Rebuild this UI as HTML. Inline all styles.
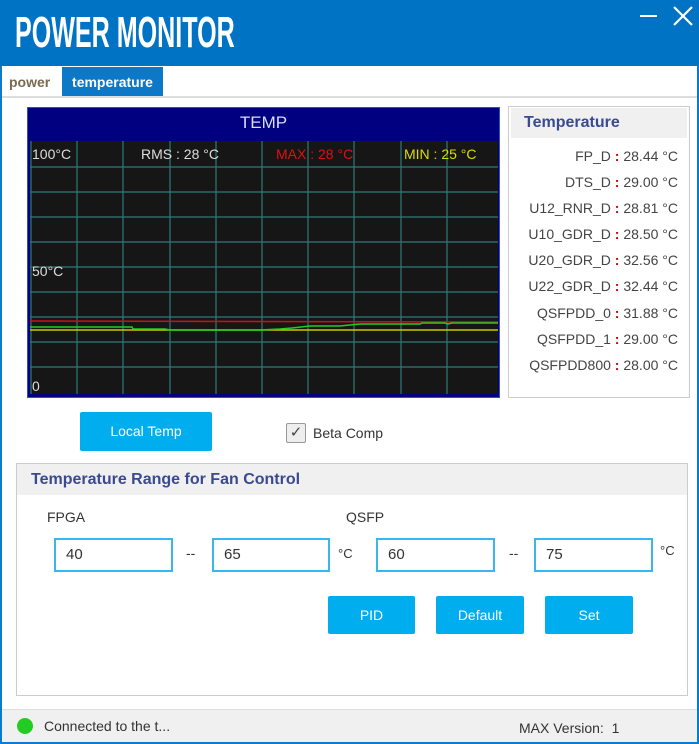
<!DOCTYPE html>
<html><head><meta charset="utf-8"><style>
*{margin:0;padding:0;box-sizing:border-box}
body{width:699px;height:744px;overflow:hidden;background:#fff;font-family:"Liberation Sans",sans-serif;position:relative;color:#333}
.abs{position:absolute}
#tb{left:0;top:0;width:699px;height:66px;background:#0073c5}
#title{left:15px;top:8px;font-family:"Liberation Sans",sans-serif;font-weight:bold;font-size:44px;color:#fff;transform:scaleX(0.57);transform-origin:left;white-space:nowrap}
#frameL{left:0;top:66px;width:2px;height:678px;background:#0b7bd0}
#frameR{left:697px;top:66px;width:2px;height:678px;background:#0b7bd0}
#frameB{left:0;top:742px;width:699px;height:2px;background:#0b7bd0}
.tab{top:67px;height:30px;font-size:14px;font-weight:bold;line-height:30px}
#tabline{left:2px;top:96px;width:695px;height:2px;background:#ddd}
.btn{background:#00aeef;color:#fff;font-size:14px;text-align:center;border-radius:2px}
.inp{height:34px;border:2px solid #39b6ee;font-size:15px;padding-left:10px;line-height:30px;color:#333;background:#fff}
.row{right:21px;font-size:14px;color:#444;text-align:right;white-space:nowrap}
.row b{color:#c00;font-weight:bold}
</style></head><body>
<div id="tb" class="abs"></div>
<div id="title" class="abs">POWER MONITOR</div>
<div class="abs" style="left:640px;top:15px;width:17px;height:2px;background:#fff"></div>
<svg class="abs" style="left:672px;top:5px" width="22" height="22"><path d="M2 2L20 20M20 2L2 20" stroke="#fff" stroke-width="2.2"/></svg>
<div id="frameL" class="abs"></div><div id="frameR" class="abs"></div><div id="frameB" class="abs"></div>
<div class="abs tab" style="left:9px;color:#7a6a50">power</div>
<div class="abs tab" style="left:62px;width:101px;background:#0d78c8;color:#fff;text-align:center">temperature</div>
<div id="tabline" class="abs"></div>

<div class="abs" style="left:27px;top:107px;width:473px;height:291px;background:#000080;border:1px solid #3050c0"></div>
<div class="abs" style="left:27px;top:113px;width:473px;text-align:center;color:#dde;font-size:17px">TEMP</div>
<svg class="abs" style="left:30px;top:141px" width="468" height="253">
<rect width="468" height="253" fill="#161616"/>
<g stroke="#2d7a78" stroke-width="1.2">
<line x1="1" y1="0" x2="1" y2="253"/>
<line x1="47" y1="0" x2="47" y2="253"/><line x1="93" y1="0" x2="93" y2="253"/><line x1="140" y1="0" x2="140" y2="253"/><line x1="186" y1="0" x2="186" y2="253"/><line x1="232" y1="0" x2="232" y2="253"/><line x1="278" y1="0" x2="278" y2="253"/><line x1="324" y1="0" x2="324" y2="253"/><line x1="371" y1="0" x2="371" y2="253"/><line x1="417" y1="0" x2="417" y2="253"/>
<line x1="0" y1="26" x2="468" y2="26"/><line x1="0" y1="51" x2="468" y2="51"/><line x1="0" y1="76" x2="468" y2="76"/><line x1="0" y1="101" x2="468" y2="101"/><line x1="0" y1="126" x2="468" y2="126"/><line x1="0" y1="151" x2="468" y2="151"/><line x1="0" y1="176" x2="468" y2="176"/><line x1="0" y1="201" x2="468" y2="201"/><line x1="0" y1="226" x2="468" y2="226"/>
</g>
<line x1="0" y1="180" x2="468" y2="181" stroke="#d01010" stroke-width="1.5"/>
<line x1="0" y1="189" x2="468" y2="189" stroke="#c8c800" stroke-width="1.5"/>
<polyline points="0,186 102,186 103,188 135,188 140,189 230,189 250,188 262,187 280,185 310,185 330,183 390,183 392,182 415,182 418,183 422,182 468,182" fill="none" stroke="#22cc22" stroke-width="1.5"/>
<text x="2" y="18" fill="#ddd" font-size="14" font-family="Liberation Sans">100°C</text>
<text x="111" y="18" fill="#ddd" font-size="14" font-family="Liberation Sans">RMS : 28 °C</text>
<text x="246" y="18" fill="#e01010" font-size="14" font-family="Liberation Sans">MAX : 28 °C</text>
<text x="374" y="18" fill="#dddd00" font-size="14" font-family="Liberation Sans">MIN : 25 °C</text>
<text x="2" y="135" fill="#ddd" font-size="14" font-family="Liberation Sans">50°C</text>
<text x="2" y="250" fill="#ddd" font-size="14" font-family="Liberation Sans">0</text>
</svg>

<div class="abs" style="left:508px;top:106px;width:182px;height:292px;border:1px solid #ccc"></div>
<div class="abs" style="left:511px;top:108px;width:176px;height:30px;background:#f0f0f0"></div>
<div class="abs" style="left:524px;top:114px;font-size:16px;font-weight:bold;color:#3a4a90">Temperature</div>
<div class="abs row" style="top:148px">FP_D <b>:</b> 28.44 °C</div>
<div class="abs row" style="top:174px">DTS_D <b>:</b> 29.00 °C</div>
<div class="abs row" style="top:200px">U12_RNR_D <b>:</b> 28.81 °C</div>
<div class="abs row" style="top:226px">U10_GDR_D <b>:</b> 28.50 °C</div>
<div class="abs row" style="top:252px">U20_GDR_D <b>:</b> 32.56 °C</div>
<div class="abs row" style="top:278px">U22_GDR_D <b>:</b> 32.44 °C</div>
<div class="abs row" style="top:305px">QSFPDD_0 <b>:</b> 31.88 °C</div>
<div class="abs row" style="top:331px">QSFPDD_1 <b>:</b> 29.00 °C</div>
<div class="abs row" style="top:357px">QSFPDD800 <b>:</b> 28.00 °C</div>

<div class="abs btn" style="left:80px;top:412px;width:132px;height:39px;line-height:39px">Local Temp</div>
<div class="abs" style="left:286px;top:423px;width:20px;height:20px;border:1px solid #999;background:#eee;border-radius:2px;font-size:15px;text-align:center;line-height:18px;color:#444">✓</div>
<div class="abs" style="left:313px;top:425px;font-size:14px;color:#333">Beta Comp</div>

<div class="abs" style="left:16px;top:463px;width:672px;height:233px;border:1px solid #ccc"></div>
<div class="abs" style="left:17px;top:464px;width:670px;height:31px;background:#f0f0f0"></div>
<div class="abs" style="left:31px;top:471px;font-size:16px;font-weight:bold;color:#3a4a90">Temperature Range for Fan Control</div>
<div class="abs" style="left:47px;top:509px;font-size:14px">FPGA</div>
<div class="abs" style="left:346px;top:509px;font-size:14px">QSFP</div>
<div class="abs inp" style="left:54px;top:538px;width:119px">40</div>
<div class="abs" style="left:186px;top:545px;font-size:14px">--</div>
<div class="abs inp" style="left:212px;top:538px;width:118px">65</div>
<div class="abs" style="left:338px;top:546px;font-size:13px">°C</div>
<div class="abs inp" style="left:376px;top:538px;width:119px">60</div>
<div class="abs" style="left:509px;top:545px;font-size:14px">--</div>
<div class="abs inp" style="left:534px;top:538px;width:119px">75</div>
<div class="abs" style="left:660px;top:543px;font-size:13px">°C</div>
<div class="abs btn" style="left:328px;top:596px;width:87px;height:38px;line-height:38px">PID</div>
<div class="abs btn" style="left:436px;top:596px;width:88px;height:38px;line-height:38px">Default</div>
<div class="abs btn" style="left:545px;top:596px;width:88px;height:38px;line-height:38px">Set</div>

<div class="abs" style="left:2px;top:709px;width:695px;height:33px;background:#f0f0f0;border-top:1px solid #ddd"></div>
<div class="abs" style="left:17px;top:718px;width:16px;height:16px;border-radius:50%;background:#22cc22"></div>
<div class="abs" style="left:44px;top:718px;font-size:14px">Connected to the t...</div>
<div class="abs" style="left:519px;top:720px;font-size:14px">MAX Version:&nbsp; 1</div>
</body></html>
